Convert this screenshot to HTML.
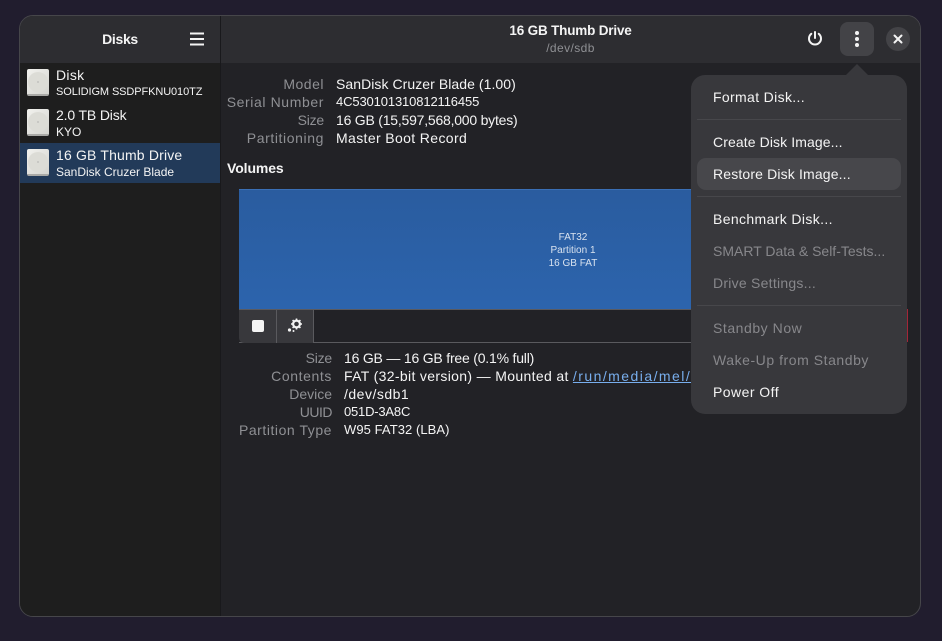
<!DOCTYPE html>
<html><head><meta charset="utf-8"><style>
*{box-sizing:border-box}
html,body{margin:0;padding:0}
body{width:942px;height:641px;background:#211d2e;position:relative;overflow:hidden;font-family:"Liberation Sans",sans-serif;color:#f4f4f4;font-size:14px}
.t{position:absolute;white-space:nowrap;line-height:18px}
.r{text-align:right}
.g{color:#8f9094}
#win{position:absolute;left:19px;top:15px;width:902px;height:602px;border-radius:14px;border:1px solid #46464a;background:#222226;overflow:hidden}
#side{position:absolute;left:0;top:47px;width:200px;height:553px;background:#1e1e1e}
#hd{position:absolute;left:0;top:0;width:900px;height:47px;background:#2d2d31}
#sep{position:absolute;left:200px;top:0;width:1px;height:600px;background:#19191c}
.sel{position:absolute;left:20px;top:143px;width:200px;height:40px;background:#223a59}
.disk{position:absolute;left:27px;width:22px;height:27px;border-radius:2px;background:linear-gradient(135deg,#f2f2ee,#d4d4cf);border-bottom:2px solid #a9a9a6}
.disk i{position:absolute;left:1px;top:3px;width:20px;height:20px;border-radius:50%;background:#dcdcd6}
.disk b{position:absolute;left:10px;top:12px;width:2px;height:2px;background:#c2c2be;border-radius:50%}
.a{font-size:14px;left:56px}
.b{font-size:12px;left:56px}
#menu{position:absolute;left:691px;top:75px;width:216px;height:339px;background:#38383c;border-radius:14px}
#arrow{position:absolute;left:846px;top:64px;width:0;height:0;border-left:11px solid transparent;border-right:11px solid transparent;border-bottom:11px solid #38383c}
.m{left:713px}
.d{color:#87878b}
.hr{position:absolute;left:697px;width:204px;height:1px;background:#47474b}
</style></head><body>
<div id="win"><div id="side"></div><div id="hd"></div><div id="sep"></div></div>
<div class="t" style="left:20px;width:200px;text-align:center;top:30px;font-weight:bold;font-size:14px;letter-spacing:-.3px">Disks</div>
<svg style="position:absolute;left:190px;top:32px" width="14" height="14"><path d="M0 1.5H14M0 7H14M0 12.5H14" stroke="#f4f4f4" stroke-width="2"/></svg>
<div class="t" style="left:221px;width:699px;text-align:center;top:22px;font-weight:bold;font-size:13.5px;letter-spacing:-.18px">16 GB Thumb Drive</div>
<div class="t g" style="left:221px;width:699px;text-align:center;top:39px;font-size:12px;letter-spacing:.4px">/dev/sdb</div>
<svg style="position:absolute;left:807px;top:30px" width="16" height="16" fill="none" stroke="#f4f4f4" stroke-width="2" stroke-linecap="round"><path d="M8 2V8"/><path d="M4.3 3.8A6 6 0 1 0 11.7 3.8"/></svg>
<div style="position:absolute;left:840px;top:22px;width:34px;height:34px;border-radius:8px;background:#434347"></div>
<svg style="position:absolute;left:853px;top:30px" width="8" height="18" fill="#f4f4f4"><circle cx="4" cy="3" r="2"/><circle cx="4" cy="9" r="2"/><circle cx="4" cy="15" r="2"/></svg>
<div style="position:absolute;left:886px;top:27px;width:24px;height:24px;border-radius:50%;background:#434347"></div>
<svg style="position:absolute;left:893px;top:34px" width="10" height="10"><path d="M1.5 1.5L8.5 8.5M8.5 1.5L1.5 8.5" stroke="#f4f4f4" stroke-width="2" stroke-linecap="round"/></svg>

<div class="sel"></div>
<div class="disk" style="top:69px"><i></i><b></b></div>
<div class="disk" style="top:109px"><i></i><b></b></div>
<div class="disk" style="top:149px"><i></i><b></b></div>
<div class="t a" style="top:66px;letter-spacing:.3px">Disk</div>
<div class="t b" style="top:83px;font-size:11px;letter-spacing:-.1px">SOLIDIGM SSDPFKNU010TZ</div>
<div class="t a" style="top:106px;letter-spacing:-.15px">2.0 TB Disk</div>
<div class="t b" style="top:123px">KYO</div>
<div class="t a" style="top:146px;letter-spacing:.17px">16 GB Thumb Drive</div>
<div class="t b" style="top:163px">SanDisk Cruzer Blade</div>

<div class="t r g" style="left:221px;width:103px;top:75px;letter-spacing:.5px">Model</div>
<div class="t r g" style="left:221px;width:103px;top:93px;letter-spacing:.6px">Serial Number</div>
<div class="t r g" style="left:221px;width:103px;top:111px;letter-spacing:-.2px">Size</div>
<div class="t r g" style="left:221px;width:103px;top:129px;letter-spacing:.6px">Partitioning</div>
<div class="t" style="left:336px;top:75px;letter-spacing:.06px">SanDisk Cruzer Blade (1.00)</div>
<div class="t" style="left:336px;top:93px;font-size:13px;letter-spacing:-.13px">4C530101310812116455</div>
<div class="t" style="left:336px;top:111px;letter-spacing:-.22px">16 GB (15,597,568,000 bytes)</div>
<div class="t" style="left:336px;top:129px;letter-spacing:.37px">Master Boot Record</div>
<div class="t" style="left:227px;top:159px;font-weight:bold;letter-spacing:-.1px">Volumes</div>

<div style="position:absolute;left:239px;top:189px;width:460px;height:121px;background:linear-gradient(180deg,#2a5c9f,#2c64ad);border-top:1px solid #3a6fb5"></div>
<div class="t" style="left:239px;width:668px;text-align:center;top:231px;font-size:10px;line-height:13px;color:#d8e2ef;white-space:pre-line">FAT32
Partition 1
16 GB FAT</div>
<div style="position:absolute;left:239px;top:309px;width:668px;height:1px;background:#5a5a5e"></div>
<div style="position:absolute;left:239px;top:342px;width:668px;height:1px;background:#5a5a5e"></div>
<div style="position:absolute;left:239px;top:310px;width:74px;height:33px;background:#38383c;border-radius:0 0 0 5px"></div>
<div style="position:absolute;left:276px;top:310px;width:1px;height:33px;background:#5a5a5e"></div>
<div style="position:absolute;left:313px;top:310px;width:1px;height:33px;background:#5a5a5e"></div>
<div style="position:absolute;left:252px;top:320px;width:12px;height:12px;border-radius:2px;background:#f4f4f4"></div>
<svg style="position:absolute;left:287px;top:318px" width="16" height="15"><circle cx="9.5" cy="6" r="3.4" fill="none" stroke="#f4f4f4" stroke-width="2.2"/><path d="M9.5 0.5V2.5M9.5 9.5V11.5M4 6H6M13 6H15M5.6 2.1L7 3.5M12 8.5L13.4 9.9M13.4 2.1L12 3.5M7 8.5L5.6 9.9" stroke="#f4f4f4" stroke-width="1.6"/><circle cx="2.5" cy="12" r="1.6" fill="#f4f4f4"/><circle cx="6.5" cy="13" r="1" fill="#f4f4f4"/></svg>
<div style="position:absolute;left:907px;top:309px;width:1px;height:33px;background:#a32638"></div>

<div class="t r g" style="left:221px;width:111px;top:349px;letter-spacing:-.2px">Size</div>
<div class="t r g" style="left:221px;width:111px;top:367px;letter-spacing:.6px">Contents</div>
<div class="t r g" style="left:221px;width:111px;top:385px">Device</div>
<div class="t r g" style="left:221px;width:111px;top:403px;letter-spacing:-.5px">UUID</div>
<div class="t r g" style="left:221px;width:111px;top:421px;letter-spacing:.55px">Partition Type</div>
<div class="t" style="left:344px;top:349px;letter-spacing:-.2px">16 GB — 16 GB free (0.1% full)</div>
<div class="t" style="left:344px;top:367px;letter-spacing:.34px">FAT (32-bit version) — Mounted at <span style="color:#78aeed;text-decoration:underline;letter-spacing:1.45px">/run/media/mel/</span></div>
<div class="t" style="left:344px;top:385px;letter-spacing:.5px">/dev/sdb1</div>
<div class="t" style="left:344px;top:403px;font-size:13px;letter-spacing:-.2px">051D-3A8C</div>
<div class="t" style="left:344px;top:421px;font-size:13px;letter-spacing:.07px">W95 FAT32 (LBA)</div>

<div id="arrow"></div>
<div id="menu"></div>
<div style="position:absolute;left:697px;top:158px;width:204px;height:32px;border-radius:9px;background:#47474b"></div>
<div class="hr" style="top:119px"></div>
<div class="hr" style="top:196px"></div>
<div class="hr" style="top:305px"></div>
<div class="t m" style="top:88px;letter-spacing:.35px">Format Disk...</div>
<div class="t m" style="top:133px;letter-spacing:.1px">Create Disk Image...</div>
<div class="t m" style="top:165px;letter-spacing:.15px">Restore Disk Image...</div>
<div class="t m" style="top:210px;letter-spacing:.37px">Benchmark Disk...</div>
<div class="t m d" style="top:242px;letter-spacing:0">SMART Data &amp; Self-Tests...</div>
<div class="t m d" style="top:274px;letter-spacing:.25px">Drive Settings...</div>
<div class="t m d" style="top:319px;letter-spacing:.55px">Standby Now</div>
<div class="t m d" style="top:351px;letter-spacing:.55px">Wake-Up from Standby</div>
<div class="t m" style="top:383px;letter-spacing:.45px">Power Off</div>
</body></html>
